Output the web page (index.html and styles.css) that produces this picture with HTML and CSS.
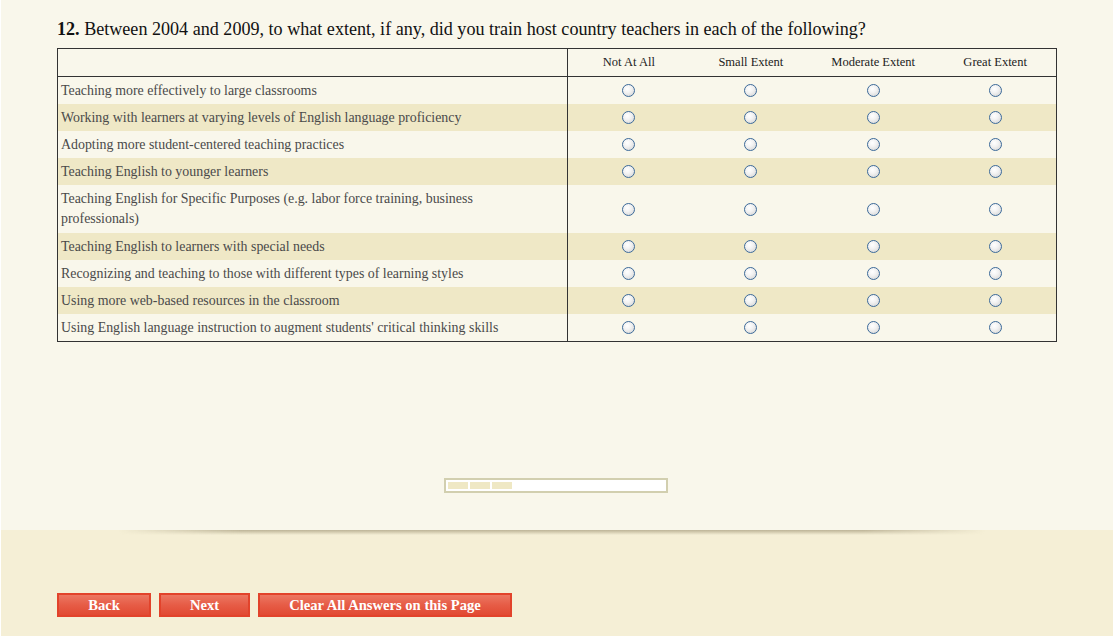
FILE: index.html
```html
<!DOCTYPE html>
<html>
<head>
<meta charset="utf-8">
<link rel="stylesheet" href="styles.css">
</head>
<body>
<div class="page">
  <div class="top-area">
    <h1 class="question"><b>12.</b> Between 2004 and 2009, to what extent, if any, did you train host country teachers in each of the following?</h1>
    <table class="grid">
      <thead>
        <tr>
          <th class="label-col"></th>
          <th>Not At All</th>
          <th>Small Extent</th>
          <th>Moderate Extent</th>
          <th>Great Extent</th>
        </tr>
      </thead>
      <tbody>
        <tr><td class="label">Teaching more effectively to large classrooms</td><td><input type="radio" name="r1"></td><td><input type="radio" name="r1"></td><td><input type="radio" name="r1"></td><td><input type="radio" name="r1"></td></tr>
        <tr class="alt"><td class="label">Working with learners at varying levels of English language proficiency</td><td><input type="radio" name="r2"></td><td><input type="radio" name="r2"></td><td><input type="radio" name="r2"></td><td><input type="radio" name="r2"></td></tr>
        <tr><td class="label">Adopting more student-centered teaching practices</td><td><input type="radio" name="r3"></td><td><input type="radio" name="r3"></td><td><input type="radio" name="r3"></td><td><input type="radio" name="r3"></td></tr>
        <tr class="alt"><td class="label">Teaching English to younger learners</td><td><input type="radio" name="r4"></td><td><input type="radio" name="r4"></td><td><input type="radio" name="r4"></td><td><input type="radio" name="r4"></td></tr>
        <tr><td class="label label-tall">Teaching English for Specific Purposes (e.g. labor force training, business professionals)</td><td><input type="radio" name="r5"></td><td><input type="radio" name="r5"></td><td><input type="radio" name="r5"></td><td><input type="radio" name="r5"></td></tr>
        <tr class="alt"><td class="label">Teaching English to learners with special needs</td><td><input type="radio" name="r6"></td><td><input type="radio" name="r6"></td><td><input type="radio" name="r6"></td><td><input type="radio" name="r6"></td></tr>
        <tr><td class="label">Recognizing and teaching to those with different types of learning styles</td><td><input type="radio" name="r7"></td><td><input type="radio" name="r7"></td><td><input type="radio" name="r7"></td><td><input type="radio" name="r7"></td></tr>
        <tr class="alt"><td class="label">Using more web-based resources in the classroom</td><td><input type="radio" name="r8"></td><td><input type="radio" name="r8"></td><td><input type="radio" name="r8"></td><td><input type="radio" name="r8"></td></tr>
        <tr><td class="label">Using English language instruction to augment students' critical thinking skills</td><td><input type="radio" name="r9"></td><td><input type="radio" name="r9"></td><td><input type="radio" name="r9"></td><td><input type="radio" name="r9"></td></tr>
      </tbody>
    </table>
    <div class="progress">
      <span class="seg"></span><span class="seg"></span><span class="seg"></span>
    </div>
  </div>
  <div class="bottom-area">
    <div class="buttons">
      <button class="btn btn-back">Back</button>
      <button class="btn btn-next">Next</button>
      <button class="btn btn-clear">Clear All Answers on this Page</button>
    </div>
  </div>
</div>
</body>
</html>
```

FILE: styles.css
```css
html, body {
  margin: 0;
  padding: 0;
  background: #ffffff;
}
body {
  font-family: "Liberation Serif", "Times New Roman", serif;
  height: 636px;
  overflow: hidden;
}
.page {
  margin-left: 1px;
  width: 1112px;
  height: 636px;
  display: flex;
  flex-direction: column;
  background: #f5efd6;
}
.top-area {
  position: relative;
  background: #f9f7eb;
  height: 530px;
  padding: 18px 56px 0 56px;
  box-sizing: border-box;
}
.top-area::after {
  content: "";
  position: absolute;
  left: 118px;
  right: 128px;
  top: 100%;
  height: 5px;
  background: linear-gradient(to bottom, rgba(170, 160, 130, 0.75), rgba(200, 190, 160, 0));
  -webkit-mask-image: linear-gradient(to right, transparent, #000 14%, #000 86%, transparent);
  mask-image: linear-gradient(to right, transparent, #000 14%, #000 86%, transparent);
}
.question {
  margin: 0 0 8px 0;
  font-size: 18.1px;
  font-weight: normal;
  line-height: 22px;
  color: #111;
}
.question b {
  font-weight: bold;
}
.grid {
  width: 1000px;
  border-collapse: collapse;
  border: 1px solid #333;
  table-layout: fixed;
}
.grid th {
  font-weight: normal;
  font-size: 12.5px;
  color: #222;
  height: 27px;
  padding: 0;
  text-align: center;
  vertical-align: middle;
  border-bottom: 1px solid #333;
}
.grid th.label-col {
  width: 509px;
  border-right: 1px solid #333;
}
.grid td {
  padding: 0;
  text-align: center;
  vertical-align: middle;
  height: 27px;
}
.grid td.label {
  text-align: left;
  font-size: 13.9px;
  line-height: 20px;
  color: #4a4a4a;
  padding: 4px 60px 3px 3px;
  border-right: 1px solid #333;
  box-sizing: border-box;
}
.grid td.label-tall {
  padding-top: 4px;
  padding-bottom: 4px;
}
.grid tr.alt td {
  background: #efe8c6;
}
.grid input[type="radio"] {
  -webkit-appearance: none;
  appearance: none;
  width: 13px;
  height: 13px;
  border: 1px solid #3c6a99;
  border-radius: 50%;
  background: radial-gradient(circle at 40% 35%, #ffffff 0%, #f2f2f2 40%, #cfcfcf 100%);
  box-sizing: border-box;
  display: block;
  margin: 0 auto;
}
.progress {
  margin: 136px auto 0 auto;
  width: 224px;
  height: 15px;
  box-sizing: border-box;
  border: 2px solid #d2cfaf;
  background: #ffffff;
  padding: 2px;
  display: flex;
  gap: 2px;
  transform: translateX(-1px);
}
.seg {
  width: 20px;
  height: 7px;
  background: #efe8c4;
}
.bottom-area {
  flex: 1;
  padding: 63px 56px 0 56px;
}
.buttons {
  display: flex;
  gap: 8px;
}
.btn {
  height: 24px;
  border: 2px solid #e2432b;
  background: linear-gradient(to bottom, #ec7762 0%, #e65c46 50%, #e14a33 100%);
  color: #ffffff;
  font-family: "Liberation Serif", "Times New Roman", serif;
  font-weight: bold;
  font-size: 14.6px;
  padding: 0;
  box-sizing: border-box;
  line-height: 20px;
}
.btn-back { width: 94px; }
.btn-next { width: 91px; }
.btn-clear { width: 254px; }
```
